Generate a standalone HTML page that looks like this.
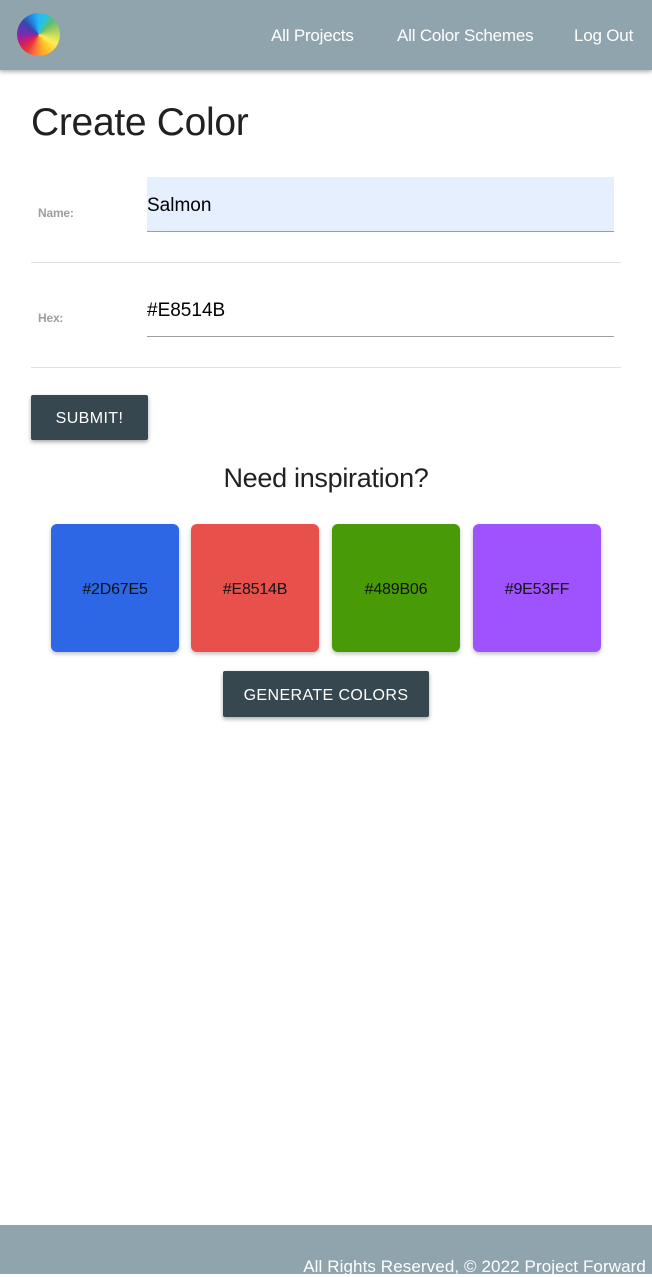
<!DOCTYPE html>
<html><head><style>
*{margin:0;padding:0;box-sizing:border-box}
body{width:652px;height:1274px;position:relative;background:#fff;font-family:"Liberation Sans",sans-serif;overflow:hidden;color:#212121}
.nav{position:absolute;left:0;top:0;width:652px;height:70px;background:#90a4ae;box-shadow:0 2px 4px rgba(0,0,0,.3)}
.logo{position:absolute;left:17px;top:13px;width:43px;height:43px;border-radius:50%;background:conic-gradient(#29b6f6,#26c6da,#66bb6a,#9ccc65,#d4e157,#ffee58,#ffca28,#ffa726,#ff7043,#e53935,#d81b60,#8e24aa,#5e35b1,#3949ab,#1e88e5,#29b6f6)}
.nl{position:absolute;top:26px;color:#fff;font-size:17px;letter-spacing:-.2px}
.abs{position:absolute}
.lbl{font-size:12px;color:#9e9e9e;font-weight:bold;letter-spacing:-.2px}
.inp{position:absolute;left:147px;width:467px;border-bottom:1px solid #9e9e9e;font-size:19px;color:#000;padding-left:0}
.hr{position:absolute;left:31px;width:590px;height:1px;background:#e0e0e0}
.btn{position:absolute;background:#37474f;color:#fff;font-size:16px;letter-spacing:.4px;display:flex;align-items:center;justify-content:center;border-radius:2px;box-shadow:0 2px 4px rgba(0,0,0,.35);padding-top:3px}
.sw{position:absolute;top:524px;width:128px;height:128px;border-radius:6px;display:flex;align-items:center;justify-content:center;font-size:16px;color:#111;box-shadow:0 2px 4px rgba(0,0,0,.25);letter-spacing:-.2px;padding-top:4px}
.foot{position:absolute;left:0;top:1225px;width:652px;height:49px;background:#90a4ae}
</style></head><body>
<div class="nav">
<div class="logo"></div>
<div class="nl" style="left:271px">All Projects</div>
<div class="nl" style="left:397px">All Color Schemes</div>
<div class="nl" style="left:574px">Log Out</div>
</div>
<div class="abs" style="left:31px;top:101px;font-size:39px;letter-spacing:-.3px">Create Color</div>
<div class="abs lbl" style="left:38px;top:206px">Name:</div>
<div class="inp" style="top:177px;height:55px;background:#e5effd;line-height:58px">Salmon</div>
<div class="hr" style="top:262px"></div>
<div class="abs lbl" style="left:38px;top:311px">Hex:</div>
<div class="inp" style="top:282px;height:55px;line-height:58px">#E8514B</div>
<div class="hr" style="top:367px"></div>
<div class="btn" style="left:31px;top:395px;width:117px;height:45px">SUBMIT!</div>
<div class="abs" style="left:0;width:652px;text-align:center;top:463px;font-size:27px;letter-spacing:-.3px">Need inspiration?</div>
<div class="sw" style="left:51px;background:#2d67e5">#2D67E5</div>
<div class="sw" style="left:191px;background:#e8514b">#E8514B</div>
<div class="sw" style="left:332px;background:#489b06">#489B06</div>
<div class="sw" style="left:473px;background:#9e53ff">#9E53FF</div>
<div class="btn" style="left:223px;top:671px;width:206px;height:46px">GENERATE COLORS</div>
<div class="foot"><div class="abs" style="right:6px;top:32px;color:#fff;font-size:17px;letter-spacing:.1px">All Rights Reserved, © 2022 Project Forward</div></div>
</body></html>
